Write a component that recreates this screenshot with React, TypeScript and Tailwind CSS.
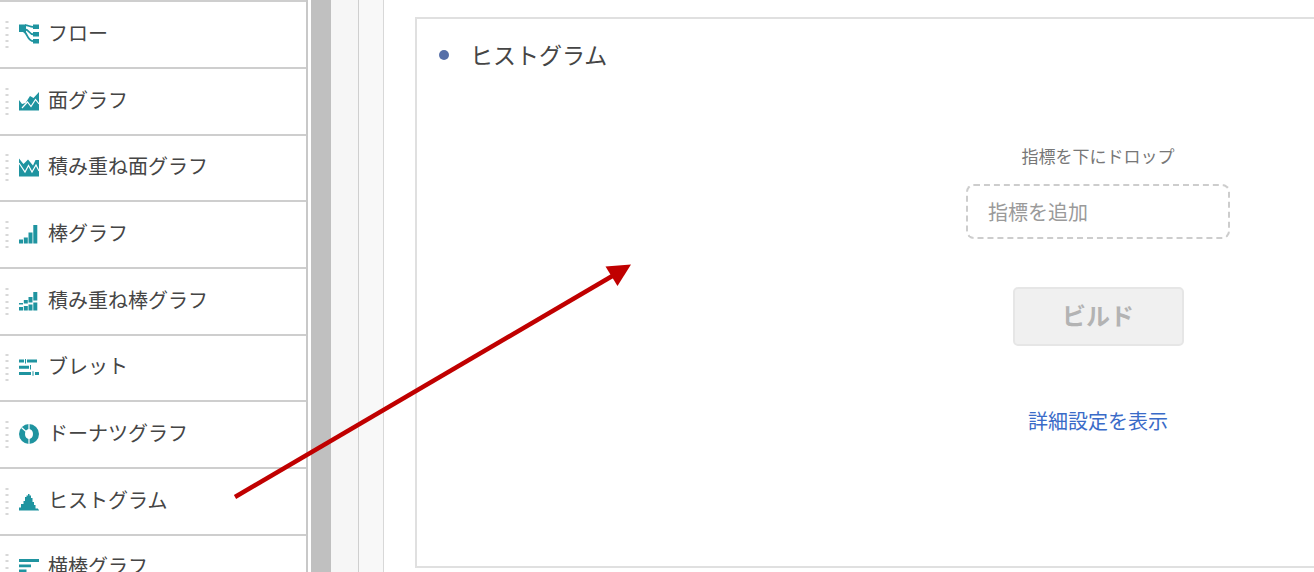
import type { ReactNode } from "react";

const TEAL = "#1f94a0";

const icons: Record<string, ReactNode> = {
  flow: (
    <>
      <path d="M0 .5h7V8H0zM14 .5h6v4.500h-6zM14 8h6v4.500h-6zM14 15h6v4.500h-6z" fill={TEAL} />
      <path d="M6 1.200c3.500 0 4.500 1.600 8 1.600M6.500 5.500c3.500 0 3.500 4.900 8 4.900M4.500 7.500c4 .5 3.500 9.700 10 9.700" fill="none" stroke={TEAL} strokeWidth="1.800" />
    </>
  ),
  area: (
    <>
      <path d="M0 9l3 4 3.500-1L11 5l3.500 2L20 1v18.500H0z" fill={TEAL} />
      <path d="M3 17L8.500 11l3.500 4.500 4.500-7L20 13" fill="none" stroke="#fff" strokeWidth="1.200" />
    </>
  ),
  stackedArea: (
    <>
      <path d="M0 1.500L4.500 7 9 2.500l5 6L16.500 3H20v16.500H0z" fill={TEAL} />
      <path d="M0 6l6 9 3.500-6.500 3.500 6.500L17 8l3 6" fill="none" stroke="#fff" strokeWidth="1.200" />
    </>
  ),
  bar: <path d="M0 15.500h4v4H0zM4.800 13.500h4v6h-4zM9.500 8.500h4v11h-4zM14.300 1h4v18.500h-4z" fill={TEAL} />,
  stackedBar: (
    <path d="M0 12h4v1.500H0zM4.800 9h4v3.500h-4zM9.500 6h4v5.500h-4zM14.300 1h4v8.500h-4zM0 16h4v3.500H0zM4.800 15h4v4.500h-4zM9.500 13.500h4v6h-4zM14.300 11.500h4v8h-4z" fill={TEAL} />
  ),
  bullet: (
    <path d="M0 2.500h5v3H0zM8 2.500h10v3H8zM6 2h1v4.500H6zM0 8.800h10v3H0zM11 8h1v4.500h-1zM0 15h12v3H0zM16 15h4v3h-4zM13.500 14.300h1v4.500h-1z" fill={TEAL} />
  ),
  donut: (
    <>
      <path fillRule="evenodd" d="M10 0a10 10 0 1 0 0 20a10 10 0 1 0 0-20zM10 5c2.500 0 4 2.200 4 5s-1.500 5-4 5-4-2.200-4-5 1.500-5 4-5z" fill={TEAL} />
      <path d="M10 0v6M10 14v6M2.500 3.500l4.500 4" fill="none" stroke="#fff" strokeWidth="1.200" />
    </>
  ),
  histogram: <path d="M0 19.500v-3h2V13h2.500v-3H6V6h1.500V4.500H9V3h1.500v1.500H12V7h1.500v4H15v3h1.500v3.500H19v1h1v1z" fill={TEAL} />,
  horizontalBar: <path d="M0 2h20v3H0zM0 7.500h12v2.700H0zM0 12.500h7.500v2.700H0z" fill={TEAL} />,
};

const charts = [
  { icon: "flow", name: "フロー" },
  { icon: "area", name: "面グラフ" },
  { icon: "stackedArea", name: "積み重ね面グラフ" },
  { icon: "bar", name: "棒グラフ" },
  { icon: "stackedBar", name: "積み重ね棒グラフ" },
  { icon: "bullet", name: "ブレット" },
  { icon: "donut", name: "ドーナツグラフ" },
  { icon: "histogram", name: "ヒストグラム" },
  { icon: "horizontalBar", name: "横棒グラフ" },
];

function DragHandle() {
  return (
    <svg className="h-[30px] w-1 shrink-0" viewBox="0 0 4 30" aria-hidden="true">
      {[2, 8, 15, 21, 27].map((y) => (
        <rect key={y} x="0.500" y={y} width="3" height="2" fill="#d8d8d8" />
      ))}
    </svg>
  );
}

function ChartList() {
  return (
    <ul className="w-[308px] shrink-0 border-r-2 border-[#c8c8c8]">
      {charts.map((c) => (
        <li key={c.name} className="h-[67px] border-t-2 border-[#cecece] nth-[3n]:h-[66px]">
          <button type="button" className="flex h-full w-full cursor-grab items-center pb-[2px] pl-[5px] text-left text-xl text-[#454545]">
            <DragHandle />
            <svg className="ml-[10px] h-5 w-5 shrink-0" viewBox="0 0 20 20" aria-hidden="true">
              {icons[c.icon]}
            </svg>
            <span className="ml-[9px] pb-[2px] leading-7">{c.name}</span>
          </button>
        </li>
      ))}
    </ul>
  );
}

function HistogramCard() {
  return (
    <section className="min-w-[1366px] border-2 border-[#e0e0e0] bg-white pb-[130px]">
      <header className="flex items-center gap-[21px] pt-[19px] pl-[22px]">
        <span className="h-[10px] w-[10px] rounded-full bg-[#566fa8]" />
        <h2 className="pb-[2px] text-[23px] leading-8 text-[#454545]">ヒストグラム</h2>
      </header>
      <form className="flex flex-col items-center pt-[72px]" onSubmit={(e) => e.preventDefault()}>
        <label htmlFor="metric" className="text-[17px] leading-6 text-[#777777]">
          指標を下にドロップ
        </label>
        <input
          id="metric"
          type="text"
          placeholder="指標を追加"
          className="mt-4 h-[55px] w-[264px] rounded-lg border-2 border-dashed border-[#cdcdcd] px-5 text-xl text-[#454545] placeholder:text-[#9a9a9a]"
        />
        <button
          type="submit"
          disabled
          className="mt-12 h-[59px] w-[171px] rounded-[5px] border-2 border-[#e6e6e6] bg-[#f0f0f0] pb-1 text-2xl font-bold text-[#b3b3b3]"
        >
          ビルド
        </button>
        <a href="#advanced" className="mt-[60px] text-xl leading-[30px] text-[#3a6bc8]">
          詳細設定を表示
        </a>
      </form>
    </section>
  );
}

export default function App() {
  return (
    <div className="relative flex h-screen overflow-hidden bg-white font-['Noto_Sans_CJK_JP',sans-serif]">
      <ChartList />
      <div className="ml-[3px] w-5 shrink-0 bg-[#c0c0c0]" />
      <div className="w-7 shrink-0 border-r border-[#cfcfcf] bg-[#f6f6f6]" />
      <div className="w-[25px] shrink-0 border-r border-[#d8d8d8] bg-[#f8f8f8]" />
      <main className="min-w-0 flex-1 overflow-hidden pt-[17px] pl-[31px]">
        <HistogramCard />
      </main>
      <svg className="pointer-events-none absolute top-0 left-0 h-[572px] w-[700px]" viewBox="0 0 700 572" aria-hidden="true">
        <path d="M235 497L614 275" stroke="#c00000" strokeWidth="4.500" />
        <path d="M631 264.500L605.500 266.500L617.500 286z" fill="#c00000" />
      </svg>
    </div>
  );
}
